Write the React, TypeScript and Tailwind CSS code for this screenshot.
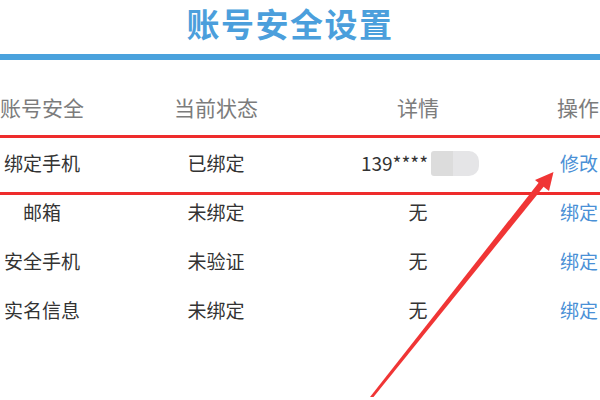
import React from "react";

const font = { fontFamily: '"Noto Sans CJK SC", "Noto Sans", sans-serif' };

function Row({
  a,
  b,
  c,
  d,
  className,
}: {
  a: React.ReactNode;
  b: string;
  c: React.ReactNode;
  d: string;
  className: string;
}) {
  return (
    <div className={`flex text-[19px] text-[#333] leading-[24px] ${className}`}>
      <div className="w-[84px] flex justify-center whitespace-nowrap">{a}</div>
      <div className="w-[264px] flex justify-center whitespace-nowrap">{b}</div>
      <div className="w-[140px] flex justify-center whitespace-nowrap">{c}</div>
      <div className="flex-1 pl-[72px] whitespace-nowrap text-[#4a90d6]">{d}</div>
    </div>
  );
}

export default function App() {
  return (
    <div className="relative w-[600px] h-[400px] bg-white overflow-hidden" style={font}>
      <div className="h-[54px] flex items-center justify-center pb-[8px] pr-[20px]">
        <span className="text-[33px] leading-none font-bold text-[#4b9fdc] tracking-[1.5px]">账号安全设置</span>
      </div>
      <div className="h-[6px] bg-[#4aa2dd]" />
      <div className="h-[75px] pt-[21px] flex items-center text-[21px] text-[#7c7c7c]">
        <div className="w-[84px] flex justify-center whitespace-nowrap">账号安全</div>
        <div className="w-[264px] flex justify-center whitespace-nowrap">当前状态</div>
        <div className="w-[140px] flex justify-center whitespace-nowrap">详情</div>
        <div className="flex-1 pl-[69px] whitespace-nowrap">操作</div>
      </div>
      <div className="border-t-[3px] border-b-[3px] border-[#ee2c2c]">
        <Row
          className="h-[54px] items-center pb-[4px]"
          a="绑定手机"
          b="已绑定"
          c={
            <span className="flex items-center pl-[4px]">
              <span>139****</span>
              <span className="ml-[3px] flex h-[25px] w-[48px] rounded-r-[10px] rounded-l-[3px] overflow-hidden blur-[0.6px]">
                <span className="w-[22px] bg-[#dcdcdc]" />
                <span className="flex-1 bg-[#e5e5e7]" />
              </span>
            </span>
          }
          d="修改"
        />
      </div>
      <Row className="h-[49px] items-start pt-[5px]" a="邮箱" b="未绑定" c="无" d="绑定" />
      <Row className="h-[49px] items-start pt-[5px]" a="安全手机" b="未验证" c="无" d="绑定" />
      <Row className="h-[49px] items-start pt-[5px]" a="实名信息" b="未绑定" c="无" d="绑定" />

      <svg className="absolute left-0 top-0" width="600" height="400" viewBox="0 0 600 400">
        <polygon points="370,397 373.5,397 545,185 540,181" fill="#f03535" />
        <polygon points="553.5,172 535,180 549,191" fill="#f03535" />
      </svg>
    </div>
  );
}
